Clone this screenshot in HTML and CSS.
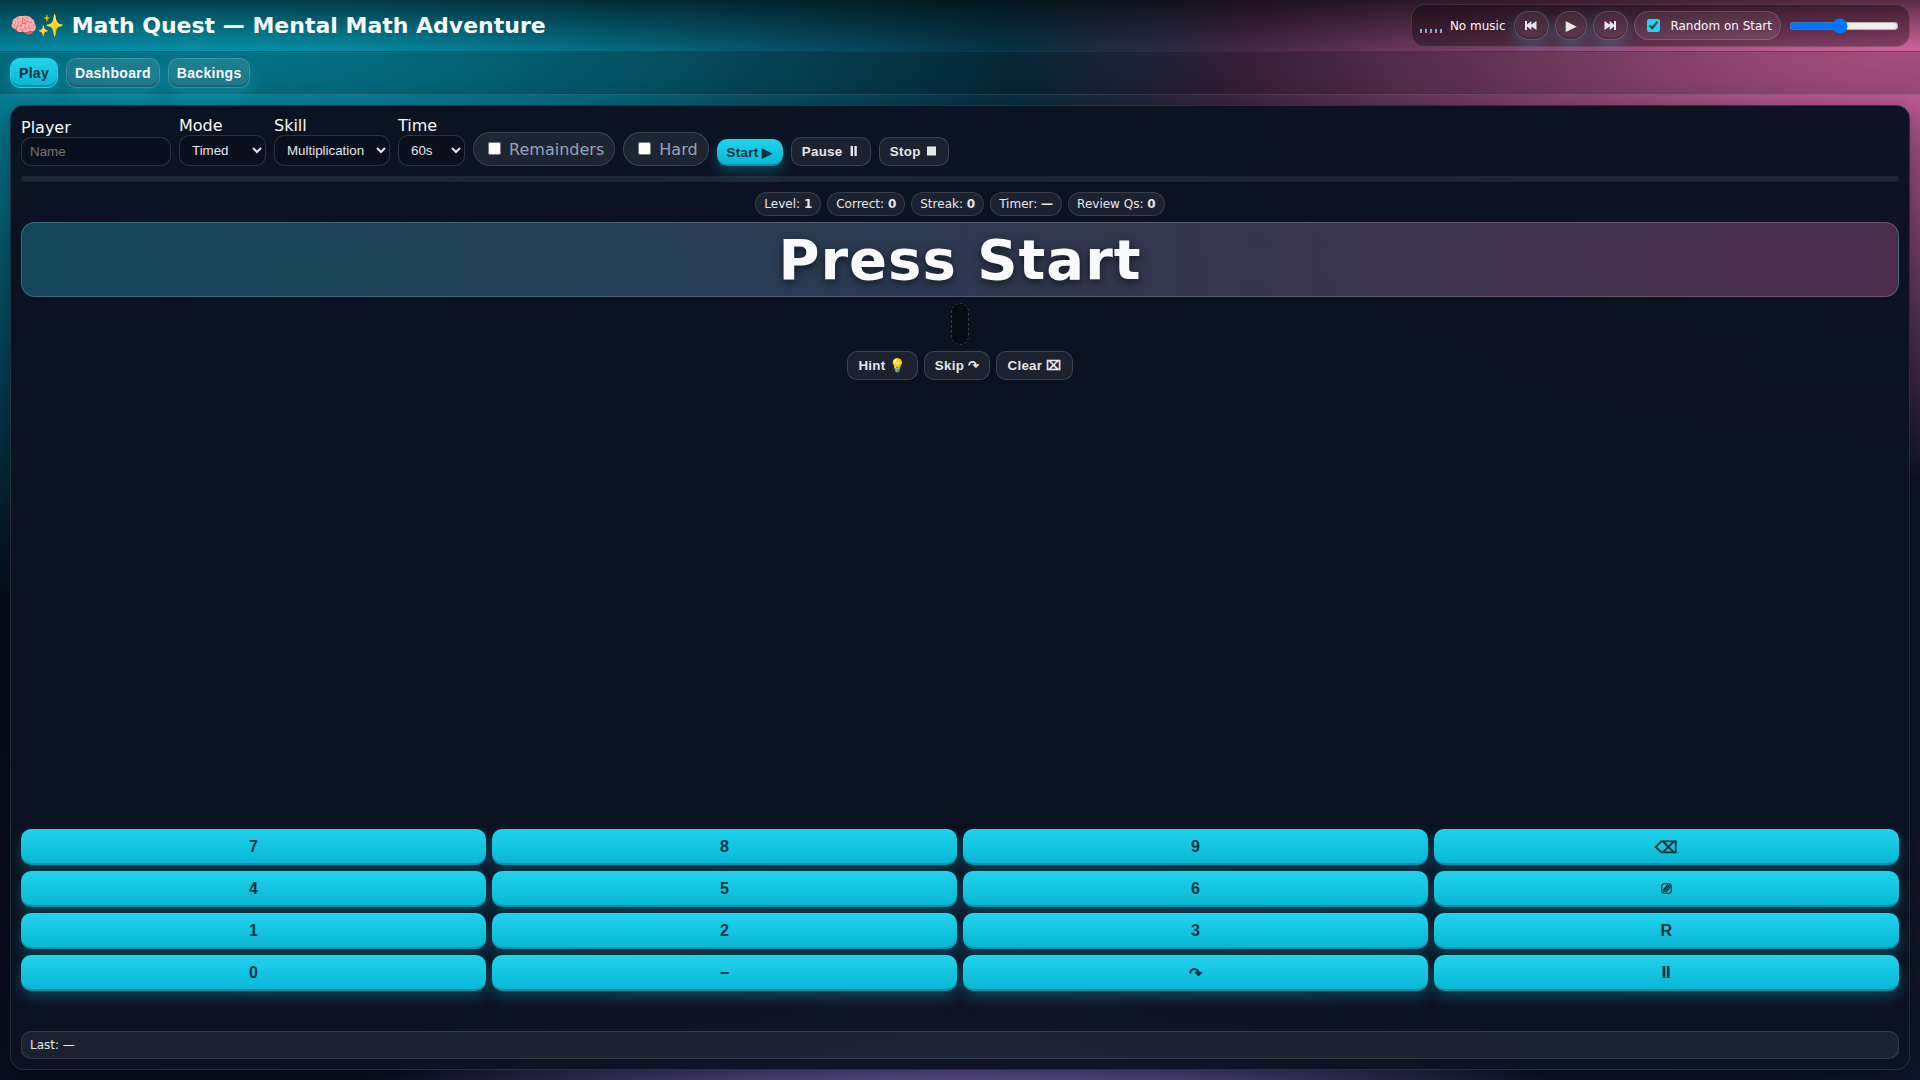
FILE: index.html
```
<!DOCTYPE html>
<html lang="en">
<head>
    <meta charset="UTF-8">
    <title>Math Quest — Mental Math Adventure</title>
    <link rel="stylesheet" href="styles.css">
</head>
<body>
    <header class="topbar">
        <h1 class="title">🧠✨ Math Quest — Mental Math Adventure</h1>
        <div class="player">
            <div class="eq"><span></span><span></span><span></span><span></span><span></span></div>
            <span class="track">No music</span>
            <div class="player-controls">
                <button class="btn ghost round" aria-label="Previous">
                    <svg class="icon" width="13.6" height="9" viewBox="0 0 13.6 9"><path d="M0 0h2v3.6L6.3 0v3.6L11.5 0v9L6.3 5.4V9L2 5.4V9H0z"/></svg>
                </button>
                <button class="btn ghost round">▶</button>
                <button class="btn ghost round" aria-label="Next">
                    <svg class="icon" width="13" height="9" viewBox="0 0 13 9"><path d="M12 0h-2v3.6L5.7 0v3.6L.5 0v9l5.2-3.6V9L10 5.4V9h2z"/></svg>
                </button>
                <label class="pill small"><input type="checkbox" class="random" checked> Random on Start</label>
            </div>
            <input type="range" class="volume" min="0" max="100" value="46">
        </div>
    </header>

    <nav class="tabs">
        <button class="tab active">Play</button>
        <button class="tab">Dashboard</button>
        <button class="tab">Backings</button>
    </nav>

    <main class="main">
        <section class="panel">
            <div class="toolbar">
                <label class="field">Player
                    <input type="text" class="input" placeholder="Name">
                </label>
                <label class="field">Mode
                    <select class="input"><option>Timed</option><option>Practice</option></select>
                </label>
                <label class="field">Skill
                    <select class="input"><option>Multiplication</option><option>Division</option></select>
                </label>
                <label class="field">Time
                    <select class="input"><option>60s</option><option>120s</option></select>
                </label>
                <label class="pill"><input type="checkbox"> Remainders</label>
                <label class="pill"><input type="checkbox"> Hard</label>
                <button class="btn">Start ▶</button>
                <button class="btn ghost">Pause <svg class="icon" width="13.3" height="10" viewBox="0 0 13.3 10"><path d="M3.6 0h2.4v10H3.6zM7.4 0h2.4v10H7.4z"/></svg></button>
                <button class="btn ghost">Stop <svg class="icon" width="13" height="10" viewBox="0 0 13 10"><path d="M2 .5h9v9H2z"/></svg></button>
            </div>

            <div class="progress"></div>

            <div class="stats">
                <span class="stat">Level: <b>1</b></span>
                <span class="stat">Correct: <b>0</b></span>
                <span class="stat">Streak: <b>0</b></span>
                <span class="stat">Timer: <b>—</b></span>
                <span class="stat">Review Qs: <b>0</b></span>
            </div>

            <div class="question">Press Start</div>
            <div class="answer"></div>

            <div class="actions">
                <button class="btn ghost">Hint 💡</button>
                <button class="btn ghost">Skip ↷</button>
                <button class="btn ghost">Clear ⌧</button>
            </div>

            <div class="keypad">
                <button class="btn key">7</button>
                <button class="btn key">8</button>
                <button class="btn key">9</button>
                <button class="btn key">⌫</button>
                <button class="btn key">4</button>
                <button class="btn key">5</button>
                <button class="btn key">6</button>
                <button class="btn key" aria-label="Clear">
                    <svg class="icon outline" width="12" height="11" viewBox="0 0 12 11"><rect x=".75" y=".75" width="9.5" height="9.5" rx="2.4"/><path d="M2 7.5L7 1.5M2.6 9L8.6 2M4.6 9.4L9.6 3.4"/></svg>
                </button>
                <button class="btn key">1</button>
                <button class="btn key">2</button>
                <button class="btn key">3</button>
                <button class="btn key">R</button>
                <button class="btn key">0</button>
                <button class="btn key">−</button>
                <button class="btn key">↷</button>
                <button class="btn key" aria-label="Pause">
                    <svg class="icon" width="9" height="12" viewBox="0 0 9 12"><path d="M.5 0h2.7v12H.5zM4.8 0h2.7v12H4.8z"/></svg>
                </button>
            </div>

            <div class="last">Last: —</div>
        </section>
    </main>
</body>
</html>
```

FILE: styles.css
```
* {
    box-sizing: border-box;
}

body {
    margin: 0;
    height: 100vh;
    display: flex;
    flex-direction: column;
    overflow: hidden;
    color: #f8fafc;
    font-family: "DejaVu Sans", sans-serif;
    background:
        radial-gradient(1350px 900px at 10% -10%, #06b6d4, transparent 80%),
        radial-gradient(1150px 600px at 100% 0%, #e66cac, transparent 80%),
        radial-gradient(820px 600px at 50% 120%, #a78bfa, transparent 80%),
        linear-gradient(135deg, #000814, #0a0f1f 40%, #0f172a);
}

.topbar {
    display: flex;
    align-items: center;
    justify-content: space-between;
    padding: 4px 10px;
    border-bottom: 1px solid rgba(255, 255, 255, 0.12);
    background: linear-gradient(180deg, rgba(0, 0, 0, 0.6), transparent);
}

.title {
    margin: 0;
    font-size: 22px;
}

.player {
    display: flex;
    align-items: center;
    gap: 8px;
    height: 43px;
    padding: 6px 8px;
    border: 1px solid rgba(255, 255, 255, 0.12);
    border-radius: 14px;
    background: rgba(0, 0, 0, 0.35);
    font-size: 12px;
}

.player-controls {
    display: flex;
    gap: 6px;
    height: 29px;
}

.eq {
    display: flex;
    align-items: flex-end;
    gap: 3px;
    height: 14px;
}

.eq span {
    width: 2px;
    height: 4px;
    background: linear-gradient(180deg, #22d3ee, #f472b6);
}

.volume {
    width: 110px;
    margin: 0 2px 0 0;
}

.tabs {
    display: flex;
    gap: 8px;
    padding: 6px 10px;
    border-bottom: 1px solid rgba(255, 255, 255, 0.12);
    background: rgba(0, 0, 0, 0.2);
}

.tab,
.btn {
    font-family: "Liberation Sans", Arial, sans-serif;
    font-weight: 700;
    letter-spacing: 0.3px;
    border-radius: 10px;
    color: #05333b;
    background: linear-gradient(180deg, #22d3ee, #06b6d4);
    box-shadow: 0 6px 14px rgba(34, 211, 238, 0.25), inset 0 -2px 0 rgba(0, 0, 0, 0.2);
}

.tab {
    padding: 6px 8px;
    border: 1px solid rgba(255, 255, 255, 0.15);
    font-size: 14px;
}

.tab:not(.active) {
    color: #f8fafc;
    background: rgba(255, 255, 255, 0.1);
}

.tab.active {
    border-color: #22d3ee;
}

.btn {
    padding: 6px 10px;
    border: none;
    font-size: 13.333px;
}

.btn.ghost {
    border: 1px solid rgba(255, 255, 255, 0.15);
    color: #e5e7eb;
    background: rgba(255, 255, 255, 0.07);
    box-shadow: none;
}

.btn.round {
    border-radius: 999px;
    box-shadow: 0 6px 14px rgba(34, 211, 238, 0.25), inset 0 -2px 0 rgba(0, 0, 0, 0.2);
}

.icon {
    fill: currentColor;
}

.icon.outline {
    fill: none;
    stroke: currentColor;
    stroke-width: 1.2;
}

.main {
    flex: 1;
    display: flex;
    padding: 10px;
}

.panel {
    flex: 1;
    display: flex;
    flex-direction: column;
    padding: 10px;
    border: 1px solid rgba(255, 255, 255, 0.12);
    border-radius: 14px;
    background: linear-gradient(180deg, rgba(11, 18, 32, 0.99), rgba(11, 18, 32, 0.95));
    box-shadow: 0 10px 30px rgba(0, 0, 0, 0.4);
}

.toolbar {
    display: flex;
    align-items: flex-end;
    gap: 8px;
}

.field {
    display: flex;
    flex-direction: column;
}

.input {
    padding: 6px 8px;
    border: 1px solid rgba(255, 255, 255, 0.15);
    border-radius: 10px;
    color: #e5e7eb;
    background: #0a0f1e;
    font-family: "Liberation Sans", Arial, sans-serif;
    font-size: 13.333px;
}

input.input {
    width: 150px;
}

.pill {
    padding: 6px 10px;
    border: 1px solid rgba(255, 255, 255, 0.15);
    border-radius: 999px;
    color: #94a3b8;
    background: rgba(255, 255, 255, 0.08);
}

.pill.small {
    display: inline-flex;
    align-items: center;
    gap: 7px;
    padding: 4px 8px;
    color: #f8fafc;
}

.random {
    accent-color: #22d3ee;
}

.progress {
    height: 6px;
    margin-top: 10px;
    border-radius: 3px;
    background: rgba(255, 255, 255, 0.08);
}

.stats,
.actions {
    display: flex;
    justify-content: center;
    gap: 6px;
}

.stats {
    margin: 10px 0 6px;
}

.stat {
    padding: 4px 8px;
    border: 1px solid rgba(255, 255, 255, 0.12);
    border-radius: 999px;
    color: #e5e7eb;
    background: rgba(255, 255, 255, 0.07);
    font-size: 12px;
}

.question {
    padding: 4px;
    border: 1px solid rgba(255, 255, 255, 0.2);
    border-radius: 14px;
    background: linear-gradient(90deg, rgba(34, 211, 238, 0.27), rgba(244, 114, 182, 0.27));
    font-size: 56px;
    font-weight: 800;
    letter-spacing: 1px;
    text-align: center;
    text-shadow: 0 3px 8px rgba(0, 0, 0, 0.6);
}

.answer {
    align-self: center;
    width: 18px;
    height: 42px;
    margin: 6px 0;
    border: 1px dashed rgba(255, 255, 255, 0.2);
    border-radius: 10px;
    background: rgba(0, 0, 0, 0.3);
}

.keypad {
    display: grid;
    grid-template-columns: repeat(4, 1fr);
    gap: 6px;
    margin-top: auto;
}

.key {
    height: 36px;
    font-size: 16px;
}

.last {
    margin-top: 40px;
    padding: 6px 8px;
    border: 1px solid rgba(255, 255, 255, 0.12);
    border-radius: 10px;
    color: #e5e7eb;
    background: rgba(255, 255, 255, 0.07);
    font-size: 12px;
}
```
